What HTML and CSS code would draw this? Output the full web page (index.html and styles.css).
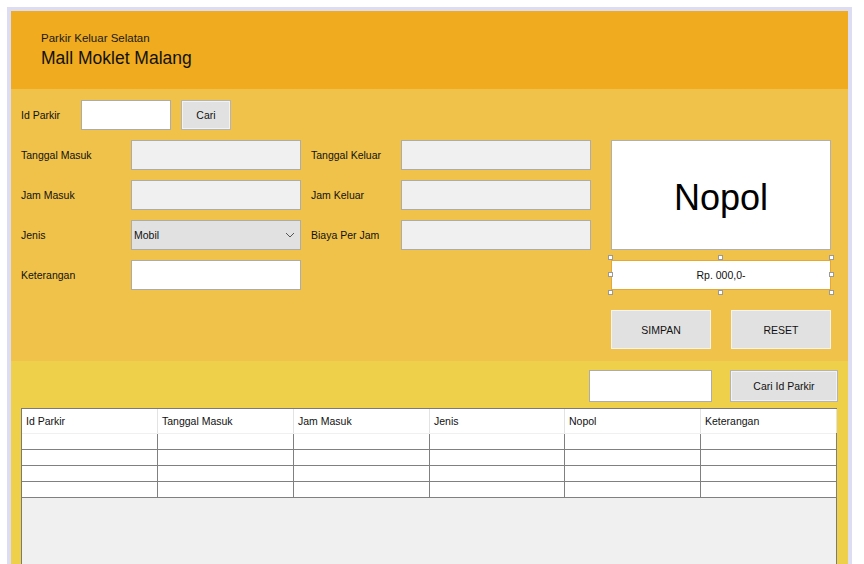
FILE: index.html
```html
<!DOCTYPE html>
<html lang="id">
<head>
<meta charset="utf-8">
<title>Parkir Keluar Selatan</title>
<link rel="stylesheet" href="styles.css">
</head>
<body>
<div class="frame">
  <header class="header">
    <div class="subtitle">Parkir Keluar Selatan</div>
    <div class="title">Mall Moklet Malang</div>
  </header>

  <section class="form-panel">
    <div class="form-grid">
      <div class="id-row">
        <span class="label id-label">Id Parkir</span>
        <div class="field white id-field"></div>
        <button class="btn btn-cari">Cari</button>
      </div>

      <span class="label r2">Tanggal Masuk</span>
      <div class="field grey r2"></div>
      <span class="label c4 r2">Tanggal Keluar</span>
      <div class="field grey c5 r2"></div>

      <span class="label r3">Jam Masuk</span>
      <div class="field grey r3"></div>
      <span class="label c4 r3">Jam Keluar</span>
      <div class="field grey c5 r3"></div>

      <span class="label r4">Jenis</span>
      <div class="combo r4">
        <span>Mobil</span>
        <svg class="chev" width="10" height="6" viewBox="0 0 10 6"><path d="M1 1 L5 5 L9 1" fill="none" stroke="#555" stroke-width="1"/></svg>
      </div>
      <span class="label c4 r4">Biaya Per Jam</span>
      <div class="field grey c5 r4"></div>

      <span class="label r5">Keterangan</span>
      <div class="field white r5"></div>

      <div class="nopol">Nopol</div>
      <div class="rp">
        Rp. 000,0-
        <i class="h tl"></i><i class="h tc"></i><i class="h tr"></i>
        <i class="h ml"></i><i class="h mr"></i>
        <i class="h bl"></i><i class="h bc"></i><i class="h br"></i>
      </div>
      <div class="actions">
        <button class="btn btn-big">SIMPAN</button>
        <button class="btn btn-big">RESET</button>
      </div>
    </div>
  </section>

  <section class="list-panel">
    <div class="search-row">
      <div class="field white search-field"></div>
      <button class="btn btn-search">Cari Id Parkir</button>
    </div>
    <div class="table">
      <div class="row head">
        <div class="cell">Id Parkir</div>
        <div class="cell">Tanggal Masuk</div>
        <div class="cell">Jam Masuk</div>
        <div class="cell">Jenis</div>
        <div class="cell">Nopol</div>
        <div class="cell">Keterangan</div>
      </div>
      <div class="row body"><div class="cell"></div><div class="cell"></div><div class="cell"></div><div class="cell"></div><div class="cell"></div><div class="cell"></div></div>
      <div class="row body"><div class="cell"></div><div class="cell"></div><div class="cell"></div><div class="cell"></div><div class="cell"></div><div class="cell"></div></div>
      <div class="row body"><div class="cell"></div><div class="cell"></div><div class="cell"></div><div class="cell"></div><div class="cell"></div><div class="cell"></div></div>
      <div class="row body"><div class="cell"></div><div class="cell"></div><div class="cell"></div><div class="cell"></div><div class="cell"></div><div class="cell"></div></div>
    </div>
  </section>
</div>
</body>
</html>
```
FILE: styles.css
```css
* { box-sizing: border-box; }
html, body {
  margin: 0;
  padding: 0;
  background: #ffffff;
  overflow: hidden;
}
body {
  font-family: "Liberation Sans", Arial, sans-serif;
  font-size: 10.5px;
  color: #111;
}
.frame {
  margin: 7px 0 0 7px;
  width: 845px;
  border: 4px solid #dcdcf2;
  border-bottom: none;
  height: 557px;
  display: flex;
  flex-direction: column;
}
.header {
  background: #f0ab1e;
  height: 78px;
  padding: 20px 0 0 30px;
  flex: none;
}
.subtitle {
  font-size: 11.5px;
  line-height: 14px;
  color: #1a1a1a;
}
.title {
  font-size: 17.5px;
  line-height: 22px;
  margin-top: 2px;
  color: #111;
}
.form-panel {
  background: #f0c24a;
  height: 272px;
  padding: 11px 0 0 10px;
  flex: none;
}
.form-grid {
  display: grid;
  grid-template-columns: 110px 170px 10px 90px 190px 20px 220px;
  grid-template-rows: 30px 30px 30px 30px 30px 39px;
  row-gap: 10px;
}
.id-row {
  grid-column: 1 / 3;
  grid-row: 1;
  display: flex;
  align-items: center;
}
.id-label { width: 60px; }
.id-field { width: 90px; height: 30px; }
.label {
  display: flex;
  align-items: center;
  grid-column: 1;
  white-space: nowrap;
}
.r2 { grid-row: 2; }
.r3 { grid-row: 3; }
.r4 { grid-row: 4; }
.r5 { grid-row: 5; }
.field { grid-column: 2; border: 1px solid #acacac; }
.label.c4 { grid-column: 4; }
.field.c5 { grid-column: 5; }
.white { background: #ffffff; }
.grey { background: #f0f0f0; }
.combo {
  grid-column: 2;
  background: #e1e1e1;
  border: 1px solid #acacac;
  display: flex;
  align-items: center;
  justify-content: space-between;
  padding: 0 5px 0 2px;
}
.chev { display: block; }
.btn {
  font-family: inherit;
  font-size: 10.5px;
  color: #111;
  background: #e1e1e1;
  border: 1px solid #b4b4b4;
  box-shadow: inset 0 0 0 1px #f2f2f2;
  padding: 0;
  margin: 0;
}
.btn-cari { width: 50px; height: 30px; margin-left: 10px; }
.nopol {
  grid-column: 7;
  grid-row: 2 / 5;
  background: #fff;
  border: 1px solid #b0b0b0;
  display: flex;
  align-items: center;
  justify-content: center;
  font-size: 36px;
  color: #000;
  padding-top: 5px;
}
.rp {
  grid-column: 7;
  grid-row: 5;
  background: #fff;
  border: 1px solid #e2a93a;
  display: flex;
  align-items: center;
  justify-content: center;
  position: relative;
}
.h {
  position: absolute;
  width: 5px;
  height: 5px;
  background: #fff;
  border: 1px solid #9a9a9a;
}
.tl { left: -4px; top: -6px; }
.tc { left: 106px; top: -6px; }
.tr { right: -4px; top: -6px; }
.ml { left: -4px; top: 11px; }
.mr { right: -4px; top: 11px; }
.bl { left: -4px; bottom: -6px; }
.bc { left: 106px; bottom: -6px; }
.br { right: -4px; bottom: -6px; }
.actions {
  grid-column: 7;
  grid-row: 6;
  margin-top: 10px;
  height: 39px;
  display: flex;
  justify-content: space-between;
}
.btn-big {
  width: 100px;
  height: 39px;
  border-color: #f4f4f4;
  box-shadow: none;
}
.list-panel {
  background: #efd04a;
  flex: 1;
  padding: 9px 10px 0 10px;
  display: flex;
  flex-direction: column;
}
.search-row {
  display: flex;
  justify-content: flex-end;
  height: 32px;
  margin-bottom: 6px;
}
.search-field { width: 123px; height: 32px; margin-right: 18px; }
.btn-search { width: 108px; height: 32px; }
.table {
  flex: 1;
  background: #f0f0f0;
  border: 1px solid #7a7a7a;
  border-bottom: none;
  width: 816px;
}
.row {
  display: grid;
  grid-template-columns: 136px 136px 136px 135px 136px 136px;
}
.head {
  background: #ffffff;
  height: 25px;
  border-bottom: 1px solid #f0f0f0;
}
.head .cell {
  border-right: 1px solid #e3e3e3;
  padding-left: 4px;
  display: flex;
  align-items: center;
  color: #111;
}
.body { height: 16px; background: #fff; }
.body .cell {
  border-right: 1px solid #808080;
  border-bottom: 1px solid #808080;
}
```
